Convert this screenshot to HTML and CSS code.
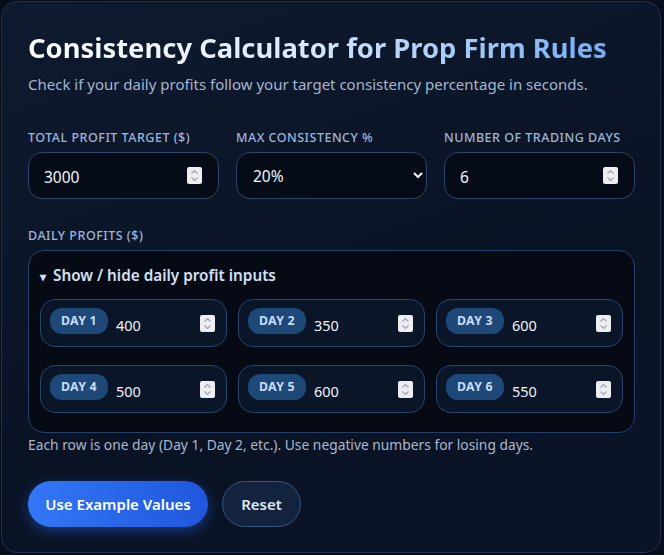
FILE: index.html
```html
<!DOCTYPE html>
<html lang="en">
<head>
    <meta charset="UTF-8">
    <meta name="viewport" content="width=device-width, initial-scale=1.0">
    <title>Consistency Calculator</title>
    <link rel="stylesheet" href="styles.css">
</head>
<body>

<div class="calc-card">
    <h1 class="calc-title">Consistency Calculator for Prop Firm Rules</h1>
    <p class="calc-sub">Check if your daily profits follow your target consistency percentage in seconds.</p>

    <div class="field-row">
        <div class="field">
            <label for="target">Total Profit Target ($)</label>
            <div class="box-input">
                <input type="number" id="target" value="3000">
                <span class="spin"><svg viewBox="0 0 15 17" width="15" height="17"><path d="M4.5 6.5 L7.5 3.5 L10.5 6.5 M4.5 10.5 L7.5 13.5 L10.5 10.5" fill="none" stroke="#9aa3b0" stroke-width="1.1"/></svg></span>
            </div>
        </div>
        <div class="field">
            <label for="maxPct">Max Consistency %</label>
            <select id="maxPct" class="box-input box-select">
                <option>10%</option>
                <option selected>20%</option>
                <option>30%</option>
                <option>40%</option>
            </select>
        </div>
        <div class="field">
            <label for="days">Number of Trading Days</label>
            <div class="box-input">
                <input type="number" id="days" value="6">
                <span class="spin"><svg viewBox="0 0 15 17" width="15" height="17"><path d="M4.5 6.5 L7.5 3.5 L10.5 6.5 M4.5 10.5 L7.5 13.5 L10.5 10.5" fill="none" stroke="#9aa3b0" stroke-width="1.1"/></svg></span>
            </div>
        </div>
    </div>

    <div class="field daily-field">
        <label>Daily Profits ($)</label>
        <details class="daily-box" open>
            <summary>Show / hide daily profit inputs</summary>
            <div class="day-grid" id="dayGrid"></div>
        </details>
        <p class="hint">Each row is one day (Day 1, Day 2, etc.). Use negative numbers for losing days.</p>
    </div>

    <div class="btn-row">
        <button class="btn btn-primary">Use Example Values</button>
        <button class="btn btn-ghost">Reset</button>
    </div>
</div>

<script>
    const profits = [400, 350, 600, 500, 600, 550];
    const dayGrid = document.getElementById('dayGrid');
    const spinSvg = '<span class="spin"><svg viewBox="0 0 15 17" width="15" height="17"><path d="M4.5 6.5 L7.5 3.5 L10.5 6.5 M4.5 10.5 L7.5 13.5 L10.5 10.5" fill="none" stroke="#9aa3b0" stroke-width="1.1"/></svg></span>';

    profits.forEach(function(value, i) {
        dayGrid.innerHTML += `<div class="day-item">
            <span class="day-pill">DAY ${i + 1}</span>
            <input type="number" value="${value}">
            ${spinSvg}
        </div>`;
    });
</script>

</body>
</html>
```

FILE: styles.css
```css
body {
    margin: 0;
    background: #070d1a;
    font-family: "Noto Sans", "Open Sans", sans-serif;
    color: #e5edf9;
}
.calc-card {
    margin: 1px 3px 1px 1px;
    background: linear-gradient(160deg, #0e1a2f 0%, #0a1324 60%, #0b1427 100%);
    border: 1px solid #1d3050;
    border-radius: 16px;
    padding: 26px 25px 24px 26px;
    min-height: 500px;
}
.calc-title {
    margin: 0;
    font-size: 27.4px;
    font-weight: 700;
    line-height: 40px;
    background: linear-gradient(90deg, #ffffff 0%, #dbe8fb 45%, #6aa8f7 100%);
    -webkit-background-clip: text;
    background-clip: text;
    color: transparent;
}
.calc-sub {
    margin: 6px 0 0 0;
    font-size: 15px;
    color: #a6b6d0;
}
.field-row {
    display: grid;
    grid-template-columns: repeat(3, minmax(0, 1fr));
    gap: 17px;
    margin-top: 35px;
}
.field label {
    display: block;
    font-size: 12.5px;
    font-weight: 500;
    letter-spacing: 0.5px;
    text-transform: uppercase;
    color: #9fb5d9;
    margin-bottom: 6px;
}
.box-input {
    display: flex;
    align-items: center;
    width: 100%;
    box-sizing: border-box;
    height: 47px;
    background: #060b18;
    border: 1px solid #2b4468;
    border-radius: 14px;
    padding: 0 16px 0 15px;
    font-family: inherit;
    font-size: 15.5px;
    color: #f1f5fc;
}
.box-input input {
    flex: 1;
    min-width: 0;
    background: transparent;
    border: none;
    outline: none;
    padding: 3px 0 0 0;
    font-family: inherit;
    font-size: 15.5px;
    color: #f1f5fc;
}
input::-webkit-inner-spin-button,
input::-webkit-outer-spin-button {
    -webkit-appearance: none;
    margin: 0;
}
.spin {
    display: block;
    width: 15px;
    height: 17px;
    background: #eceef2;
    border-radius: 2px;
}
.spin svg {
    display: block;
}
.box-select {
    padding-left: 12px;
}
.daily-field {
    margin-top: 28px;
}
.daily-box {
    border: 1px solid #23406a;
    border-radius: 16px;
    background: #050a15;
    padding: 14px 11px 19px 11px;
}
.daily-box summary {
    cursor: pointer;
    font-size: 15.3px;
    font-weight: 600;
    color: #d3e0f3;
    list-style: none;
    margin-bottom: 14px;
}
.daily-box summary::before {
    content: "\25BE";
    font-size: 12px;
    margin-right: 7px;
}
.day-grid {
    display: grid;
    grid-template-columns: repeat(3, minmax(0, 1fr));
    column-gap: 11px;
    row-gap: 18px;
}
.day-item {
    display: flex;
    align-items: center;
    box-sizing: border-box;
    height: 48px;
    border: 1px solid #27456d;
    border-radius: 15px;
    background: #0a1528;
    padding: 0 11px 0 9px;
}
.day-pill {
    background: #1d4878;
    color: #c9dcf4;
    font-size: 12.3px;
    font-weight: 700;
    border-radius: 12px;
    padding: 4px 11px 5px 11px;
    margin-top: -5px;
    letter-spacing: 0.3px;
}
.day-item input {
    flex: 1;
    min-width: 0;
    background: transparent;
    border: none;
    outline: none;
    font-family: inherit;
    font-size: 14.5px;
    color: #eef3fb;
    margin-left: 8px;
    padding: 4px 0 0 0;
}
.hint {
    margin: 2px 0 0 0;
    font-size: 13.8px;
    color: #a9b8cf;
}
.btn-row {
    display: flex;
    gap: 14px;
    margin-top: 27px;
}
.btn {
    height: 46px;
    border-radius: 23px;
    font-family: inherit;
    font-size: 15px;
    font-weight: 600;
    cursor: pointer;
}
.btn-primary {
    width: 180px;
    border: none;
    color: #ffffff;
    background: linear-gradient(90deg, #3377f5 0%, #1f57dc 100%);
    box-shadow: 0 4px 14px rgba(37, 99, 235, 0.45);
}
.btn-ghost {
    width: 79px;
    border: 1px solid #34557f;
    color: #dce6f4;
    background: #14233d;
}
```
